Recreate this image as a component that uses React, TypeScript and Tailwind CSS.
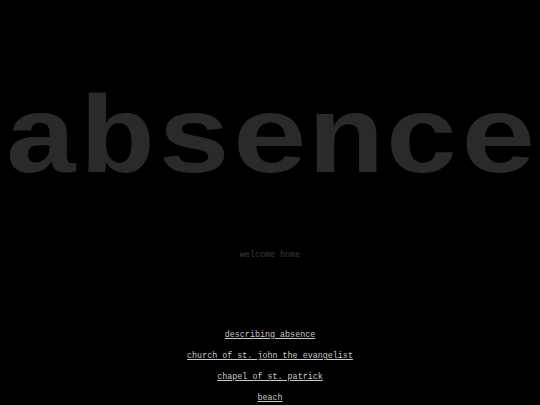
export default function App() {
  const links = [
    "describing absence",
    "church of st. john the evangelist",
    "chapel of st. patrick",
    "beach",
  ];
  return (
    <div className="w-[540px] h-[405px] overflow-hidden bg-black font-['Liberation_Mono',monospace] text-center">
      <h1 className="pt-[87px] text-[127px] leading-[124px] font-bold text-[#2a2a2a] scale-y-[0.86]">absence</h1>
      <p className="mt-[39px] text-[8.4px] leading-[10px] text-[#3c3c3c]">welcome home</p>
      <ul className="mt-[70px] flex flex-col items-center gap-[11px]">
        {links.map((l) => (
          <li key={l} className="text-[8.4px] leading-[10px]">
            <a href="#" className="text-[#c8c8c8] underline">{l}</a>
          </li>
        ))}
      </ul>
    </div>
  );
}
